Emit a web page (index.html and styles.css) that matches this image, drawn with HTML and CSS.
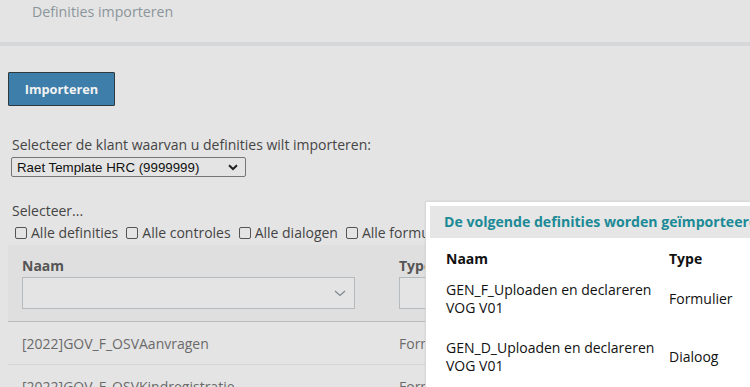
FILE: index.html
```html
<!DOCTYPE html>
<html>
<head>
<meta charset="utf-8">
<link rel="stylesheet" href="styles.css">
</head>
<body>
<div class="page">
  <header class="topbar">
    <div class="title">Definities importeren</div>
  </header>
  <div class="divider"></div>
  <main class="content">
    <button class="btn-primary">Importeren</button>
    <div class="field">
      <label class="field-label">Selecteer de klant waarvan u definities wilt importeren:</label>
      <div class="native-select">
        <span>Raet Template HRC (9999999)</span>
        <svg class="chev-bold" width="10" height="7" viewBox="0 0 10 7"><path d="M1 1.2 L5 5 L9 1.2" fill="none" stroke="#222" stroke-width="2"/></svg>
      </div>
    </div>
    <div class="select-block">
      <div class="select-label">Selecteer...</div>
      <div class="checks">
        <label class="check"><span class="box"></span>Alle definities</label>
        <label class="check"><span class="box"></span>Alle controles</label>
        <label class="check"><span class="box"></span>Alle dialogen</label>
        <label class="check"><span class="box"></span>Alle formulieren</label>
      </div>
    </div>
    <div class="grid">
      <div class="grid-head">
        <div class="col col-name">
          <div class="col-title">Naam</div>
          <div class="filter">
            <svg width="12" height="7" viewBox="0 0 12 7"><path d="M1 1 L6 5.5 L11 1" fill="none" stroke="#7d8a90" stroke-width="1.3"/></svg>
          </div>
        </div>
        <div class="col col-type">
          <div class="col-title">Type</div>
          <div class="filter"></div>
        </div>
      </div>
      <div class="grid-row">
        <div class="cell cell-name">[2022]GOV_F_OSVAanvragen</div>
        <div class="cell cell-type">Formulier</div>
      </div>
      <div class="grid-row">
        <div class="cell cell-name">[2022]GOV_F_OSVKindregistratie</div>
        <div class="cell cell-type">Formulier</div>
      </div>
    </div>
  </main>

  <div class="dialog">
    <div class="dialog-head">De volgende definities worden geïmporteerd</div>
    <div class="dialog-body">
      <div class="d-row d-header">
        <div class="d-name">Naam</div>
        <div class="d-type">Type</div>
      </div>
      <div class="d-row">
        <div class="d-name">GEN_F_Uploaden en declareren VOG V01</div>
        <div class="d-type">Formulier</div>
      </div>
      <div class="d-row">
        <div class="d-name">GEN_D_Uploaden en declareren VOG V01</div>
        <div class="d-type">Dialoog</div>
      </div>
    </div>
  </div>
</div>
</body>
</html>
```
FILE: styles.css
```css
html, body {
  margin: 0;
  padding: 0;
  width: 750px;
  height: 387px;
  overflow: hidden;
  background: #e4e4e4;
}
.page {
  position: relative;
  width: 750px;
  height: 387px;
  overflow: hidden;
  font-family: "Open Sans", "DejaVu Sans", sans-serif;
  font-size: 14px;
  color: #444;
}
.topbar {
  height: 42px;
  display: flex;
  align-items: flex-start;
}
.title {
  padding: 2px 0 0 32px;
  color: #8b959b;
  font-size: 14.2px;
  line-height: 20px;
}
.divider {
  height: 4px;
  background: #d6d7d9;
}
.content {
  padding: 26px 0 0 8px;
  display: flex;
  flex-direction: column;
  align-items: flex-start;
}
.btn-primary {
  width: 107px;
  height: 34px;
  background: #3d7eaa;
  border: 1px solid #2e3a40;
  border-radius: 1px;
  color: #f2f2f2;
  font-family: "Open Sans", sans-serif;
  font-weight: 700;
  font-size: 12.8px;
  padding: 0;
}
.field {
  margin-top: 29px;
  padding-left: 4px;
  display: flex;
  flex-direction: column;
}
.field-label {
  line-height: 20px;
  color: #454545;
}
.native-select {
  margin-top: 2px;
  margin-left: -1px;
  height: 18px;
  border: 1px solid #767676;
  border-radius: 2px;
  display: flex;
  align-items: center;
  justify-content: space-between;
  padding: 0 7px 0 5px;
  box-sizing: content-box;
  width: 221px;
  font-family: "Liberation Sans", Arial, sans-serif;
  font-size: 13.3px;
  color: #111;
}
.chev-bold { margin-top: 1px; }
.select-block {
  margin-top: 24px;
  padding-left: 4px;
}
.select-label {
  line-height: 20px;
}
.checks {
  display: flex;
  gap: 8px;
  margin-top: 2px;
  padding-left: 3px;
  white-space: nowrap;
}
.check {
  display: flex;
  align-items: center;
  gap: 4px;
  line-height: 20px;
}
.box {
  width: 10px;
  height: 10px;
  border: 1px solid #555;
  border-radius: 2px;
  background: transparent;
}
.grid {
  margin-top: 2px;
  width: 742px;
}
.grid-head {
  display: flex;
  background: #dfdfdf;
  border-bottom: 1px solid #b9bdbf;
  height: 77px;
  box-sizing: border-box;
  padding-top: 10px;
}
.col {
  padding-left: 14px;
  display: flex;
  flex-direction: column;
  box-sizing: border-box;
}
.col-name { width: 377px; }
.col-type { width: 300px; }
.col-title {
  font-weight: 700;
  color: #555;
  line-height: 22px;
}
.filter {
  box-sizing: border-box;
  height: 32px;
  border: 1px solid #b4babd;
  background: #e4e4e4;
  display: flex;
  align-items: center;
  justify-content: flex-end;
  padding-right: 8px;
}
.col-name .filter { width: 333px; }
.col-type .filter { width: 200px; }
.grid-row {
  display: flex;
  height: 42px;
  border-bottom: 1px solid #d6d6d6;
  align-items: center;
  color: #6a6a6a;
}
.cell {
  padding-left: 14px;
  box-sizing: border-box;
  white-space: nowrap;
}
.cell-name { width: 377px; }
.cell-type { width: 300px; }

.dialog {
  position: absolute;
  left: 425px;
  top: 201px;
  width: 500px;
  height: 300px;
  background: #fff;
  border: 1px solid #d9d9d9;
  padding: 4px;
  box-shadow: 0 0 2px rgba(0,0,0,0.08);
}
.dialog-head {
  height: 32px;
  background: #e6e6e6;
  color: #1b8a96;
  font-weight: 700;
  font-size: 14.1px;
  line-height: 32px;
  padding-left: 14px;
  white-space: nowrap;
}
.dialog-body {
  padding: 12px 0 0 16px;
  color: #111;
}
.d-row {
  display: flex;
  align-items: center;
  margin-bottom: 22px;
}
.d-header {
  font-weight: 700;
  margin-bottom: 13px;
}
.d-name {
  width: 223px;
  line-height: 18px;
}
.d-type { line-height: 18px; }
```
